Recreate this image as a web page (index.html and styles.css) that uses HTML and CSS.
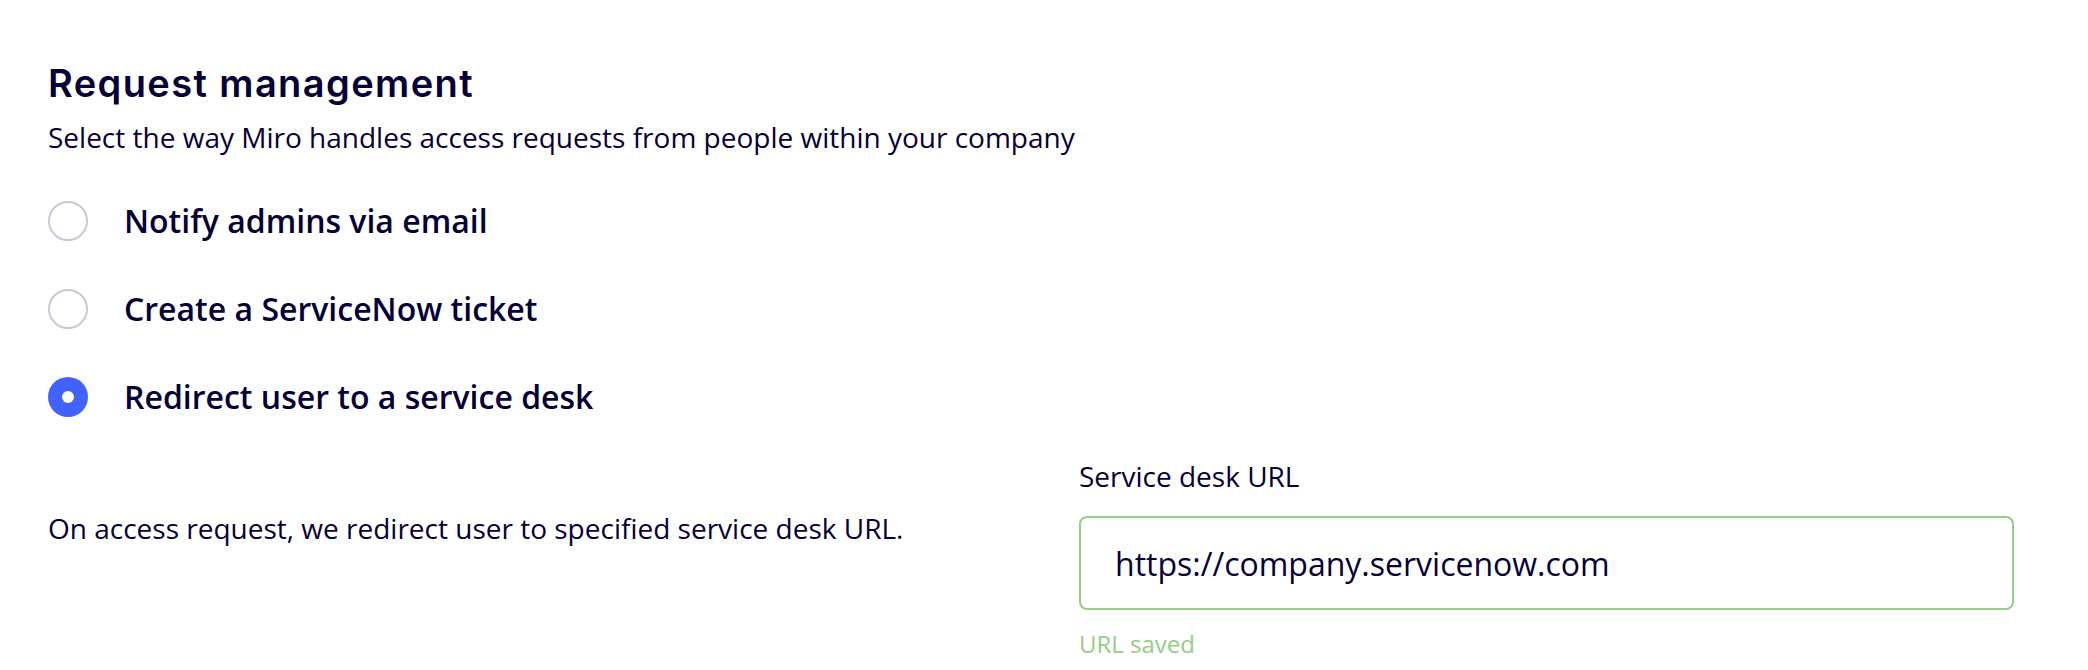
FILE: index.html
```html
<!DOCTYPE html>
<html lang="en">
<head>
<meta charset="utf-8">
<title>Request management</title>
<link rel="stylesheet" href="styles.css">
</head>
<body>
<main class="page">
  <h1 class="title">Request management</h1>
  <p class="subtitle">Select the way Miro handles access requests from people within your company</p>
  <div class="options">
    <label class="option">
      <span class="radio"></span>
      <span class="option-label">Notify admins via email</span>
    </label>
    <label class="option">
      <span class="radio"></span>
      <span class="option-label">Create a ServiceNow ticket</span>
    </label>
    <label class="option">
      <span class="radio radio-checked"></span>
      <span class="option-label">Redirect user to a service desk</span>
    </label>
  </div>
  <section class="redirect">
    <p class="redirect-text">On access request, we redirect user to specified service desk URL.</p>
    <div class="field">
      <div class="field-label">Service desk URL</div>
      <input class="field-input" type="text" value="https://company.servicenow.com">
      <div class="field-hint">URL saved</div>
    </div>
  </section>
</main>
</body>
</html>
```
FILE: styles.css
```css
html, body {
  margin: 0;
  padding: 0;
  background: #ffffff;
}

body {
  font-family: "Open Sans", "Noto Sans", sans-serif;
  color: #050038;
}

.page {
  padding: 61px 74px 0 48px;
}

.title {
  margin: 0;
  font-family: "Inter", "Open Sans", sans-serif;
  font-weight: 600;
  font-size: 38px;
  line-height: 44px;
  letter-spacing: 1.4px;
}

.subtitle {
  margin: 14px 0 0;
  font-size: 28px;
  line-height: 36px;
}

.options {
  margin-top: 46px;
  display: flex;
  flex-direction: column;
  gap: 48px;
}

.option {
  display: flex;
  align-items: center;
  gap: 36px;
  height: 40px;
}

.radio {
  box-sizing: border-box;
  width: 40px;
  height: 40px;
  border-radius: 50%;
  border: 2px solid #c8c7d4;
  background: #ffffff;
  flex: none;
  display: flex;
  align-items: center;
  justify-content: center;
}

.radio-checked {
  border: none;
  background: #4262ff;
}

.radio-checked::after {
  content: "";
  width: 12px;
  height: 12px;
  border-radius: 50%;
  background: #ffffff;
}

.option-label {
  font-weight: 600;
  font-size: 32px;
  line-height: 40px;
}

.redirect {
  margin-top: 41px;
  display: grid;
  grid-template-columns: 1fr 935px;
}

.redirect-text {
  margin: 52px 0 0;
  font-size: 28px;
  line-height: 36px;
}

.field {
  display: flex;
  flex-direction: column;
}

.field-label {
  font-size: 28px;
  line-height: 36px;
}

.field-input {
  margin-top: 22px;
  box-sizing: border-box;
  height: 94px;
  width: 100%;
  padding: 0 34px;
  border: 2px solid #94cc88;
  border-radius: 8px;
  font-family: "Open Sans", "Noto Sans", sans-serif;
  font-size: 32px;
  color: #050038;
  background: #ffffff;
  outline: none;
}

.field-hint {
  margin-top: 18px;
  font-size: 24px;
  line-height: 32px;
  color: #94cc88;
}
```
